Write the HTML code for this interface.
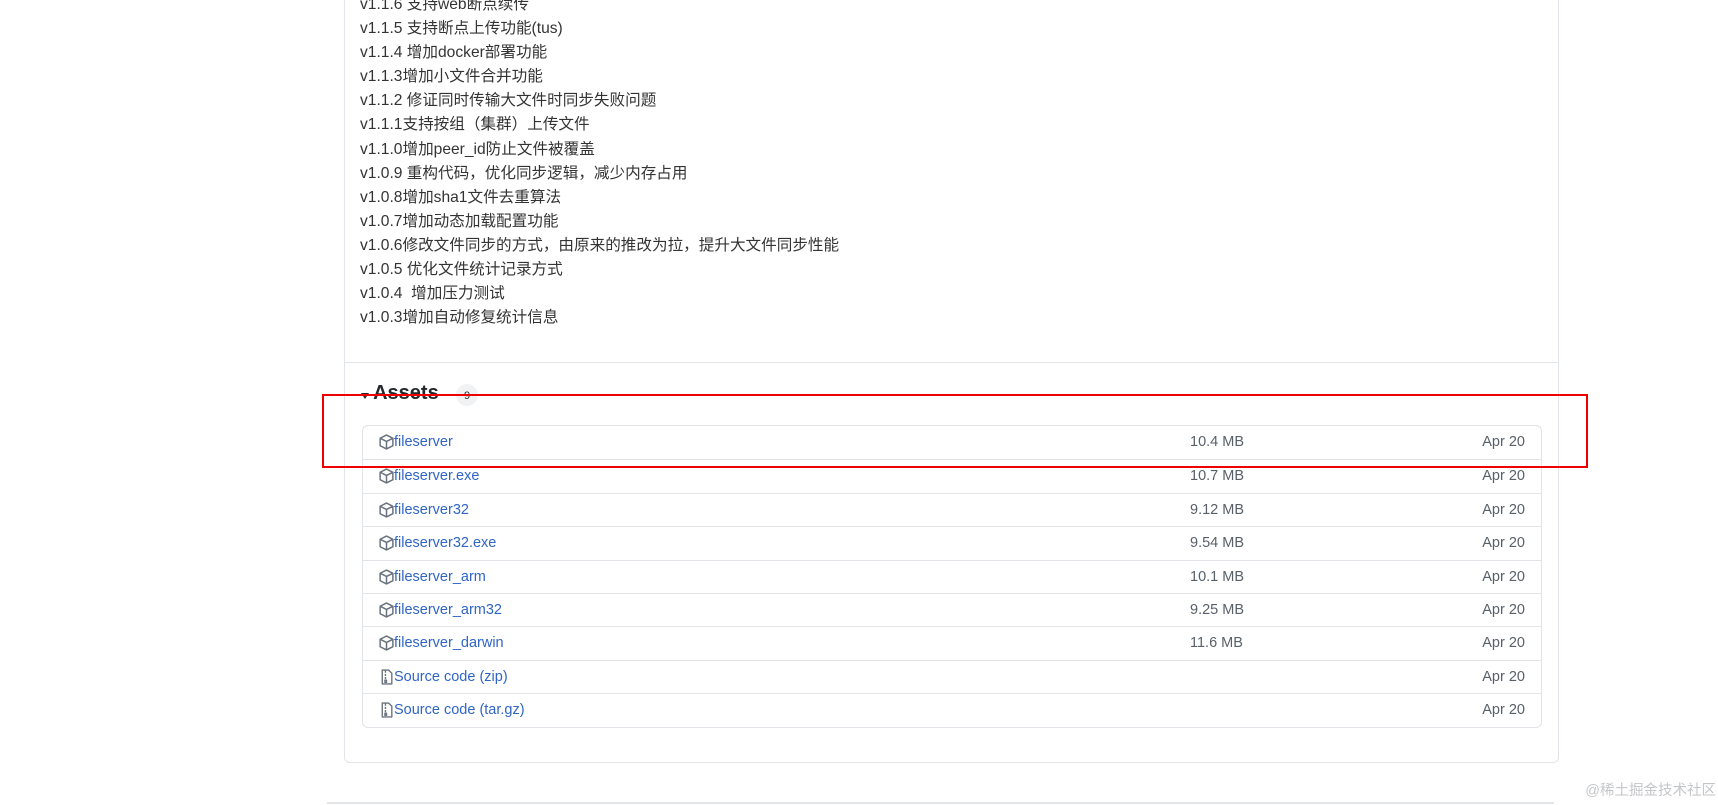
<!DOCTYPE html>
<html><head><meta charset="utf-8"><style>
*{margin:0;padding:0;box-sizing:border-box}
body{width:1718px;height:805px;background:#fff;position:relative;overflow:hidden;font-family:"Liberation Sans","Noto Sans CJK SC",sans-serif;color:#24292e}
.box{position:absolute;left:344px;top:-20px;width:1215px;height:783px;border:1px solid #e1e4e8;border-radius:6px}
.lines{position:absolute;left:360px;top:-7px;font-size:15.6px;line-height:24.1px;color:#333}
.sep{position:absolute;left:345px;width:1213px;top:362px;height:1px;background:#e1e4e8}
.ah{position:absolute;left:362px;top:382px;font-size:20px;font-weight:bold}
.tri{position:absolute;left:361px;top:393px;width:0;height:0;border-left:4px solid transparent;border-right:4px solid transparent;border-top:6px solid #24292e}
.badge{position:absolute;left:456px;top:384px;width:22px;height:22px;border-radius:11px;background:#f1f2f4;font-size:11px;text-align:center;line-height:24px}
.tbl{position:absolute;left:362px;top:425px;width:1180px;border:1px solid #e1e4e8;border-radius:6px}
.row{height:33.4px;border-top:1px solid #e1e4e8;position:relative;font-size:14.5px}
.row:first-child{border-top:none}
.row svg{position:absolute;left:15px;top:7px}
.nm{position:absolute;left:31px;top:8px;color:#2f65c5}
.nm span{font-weight:normal}
.sz{position:absolute;left:827px;top:8px;color:#586069}
.dt{position:absolute;right:16px;top:8px;color:#586069}
.red{position:absolute;left:322px;top:394px;width:1266px;height:74px;border:2.5px solid #e00}
.bl{position:absolute;left:327px;top:802px;width:1227px;height:2px;background:#e1e4e8}
.wm{position:absolute;right:2px;top:779px;font-size:14.5px;color:#c4c6c9;white-space:nowrap}
</style></head><body>
<div class="box"></div>
<div class="lines">
v1.1.6 支持web断点续传<br>v1.1.5 支持断点上传功能(tus)<br>v1.1.4 增加docker部署功能<br>v1.1.3增加小文件合并功能<br>v1.1.2 修证同时传输大文件时同步失败问题<br>v1.1.1支持按组（集群）上传文件<br>v1.1.0增加peer_id防止文件被覆盖<br>v1.0.9 重构代码，优化同步逻辑，减少内存占用<br>v1.0.8增加sha1文件去重算法<br>v1.0.7增加动态加载配置功能<br>v1.0.6修改文件同步的方式，由原来的推改为拉，提升大文件同步性能<br>v1.0.5 优化文件统计记录方式<br>v1.0.4&nbsp; 增加压力测试<br>v1.0.3增加自动修复统计信息
</div>
<div class="sep"></div>
<div class="tri"></div>
<div class="ah">&nbsp;&nbsp;Assets</div>
<div class="badge">9</div>
<div class="tbl">
<div class="row"><svg width="17" height="18" viewBox="0 0 16 16"><path d="M8 1.5L14 4.5V11.5L8 14.5L2 11.5V4.5Z M2 4.5L8 7.5L14 4.5 M8 7.5V14.5" fill="none" stroke="#6a737d" stroke-width="1.4" stroke-linejoin="round"/></svg><div class="nm">fileserver</div><div class="sz">10.4 MB</div><div class="dt">Apr 20</div></div>
<div class="row"><svg width="17" height="18" viewBox="0 0 16 16"><path d="M8 1.5L14 4.5V11.5L8 14.5L2 11.5V4.5Z M2 4.5L8 7.5L14 4.5 M8 7.5V14.5" fill="none" stroke="#6a737d" stroke-width="1.4" stroke-linejoin="round"/></svg><div class="nm">fileserver.exe</div><div class="sz">10.7 MB</div><div class="dt">Apr 20</div></div>
<div class="row"><svg width="17" height="18" viewBox="0 0 16 16"><path d="M8 1.5L14 4.5V11.5L8 14.5L2 11.5V4.5Z M2 4.5L8 7.5L14 4.5 M8 7.5V14.5" fill="none" stroke="#6a737d" stroke-width="1.4" stroke-linejoin="round"/></svg><div class="nm">fileserver32</div><div class="sz">9.12 MB</div><div class="dt">Apr 20</div></div>
<div class="row"><svg width="17" height="18" viewBox="0 0 16 16"><path d="M8 1.5L14 4.5V11.5L8 14.5L2 11.5V4.5Z M2 4.5L8 7.5L14 4.5 M8 7.5V14.5" fill="none" stroke="#6a737d" stroke-width="1.4" stroke-linejoin="round"/></svg><div class="nm">fileserver32.exe</div><div class="sz">9.54 MB</div><div class="dt">Apr 20</div></div>
<div class="row"><svg width="17" height="18" viewBox="0 0 16 16"><path d="M8 1.5L14 4.5V11.5L8 14.5L2 11.5V4.5Z M2 4.5L8 7.5L14 4.5 M8 7.5V14.5" fill="none" stroke="#6a737d" stroke-width="1.4" stroke-linejoin="round"/></svg><div class="nm">fileserver_arm</div><div class="sz">10.1 MB</div><div class="dt">Apr 20</div></div>
<div class="row"><svg width="17" height="18" viewBox="0 0 16 16"><path d="M8 1.5L14 4.5V11.5L8 14.5L2 11.5V4.5Z M2 4.5L8 7.5L14 4.5 M8 7.5V14.5" fill="none" stroke="#6a737d" stroke-width="1.4" stroke-linejoin="round"/></svg><div class="nm">fileserver_arm32</div><div class="sz">9.25 MB</div><div class="dt">Apr 20</div></div>
<div class="row"><svg width="17" height="18" viewBox="0 0 16 16"><path d="M8 1.5L14 4.5V11.5L8 14.5L2 11.5V4.5Z M2 4.5L8 7.5L14 4.5 M8 7.5V14.5" fill="none" stroke="#6a737d" stroke-width="1.4" stroke-linejoin="round"/></svg><div class="nm">fileserver_darwin</div><div class="sz">11.6 MB</div><div class="dt">Apr 20</div></div>
<div class="row"><svg width="17" height="18" viewBox="0 0 16 16"><path d="M4 1.5H10L13 4.5V14.5H4Z M7 2V4 M7 5V7 M7 8V10 M6.5 11H8V13H6.5Z" fill="none" stroke="#6a737d" stroke-width="1.3" stroke-linejoin="round"/></svg><div class="nm">Source code <span>(zip)</span></div><div class="dt">Apr 20</div></div>
<div class="row"><svg width="17" height="18" viewBox="0 0 16 16"><path d="M4 1.5H10L13 4.5V14.5H4Z M7 2V4 M7 5V7 M7 8V10 M6.5 11H8V13H6.5Z" fill="none" stroke="#6a737d" stroke-width="1.3" stroke-linejoin="round"/></svg><div class="nm">Source code <span>(tar.gz)</span></div><div class="dt">Apr 20</div></div>
</div>
<div class="red"></div>
<div class="bl"></div>
<div class="wm">@稀土掘金技术社区</div>
</body></html>
